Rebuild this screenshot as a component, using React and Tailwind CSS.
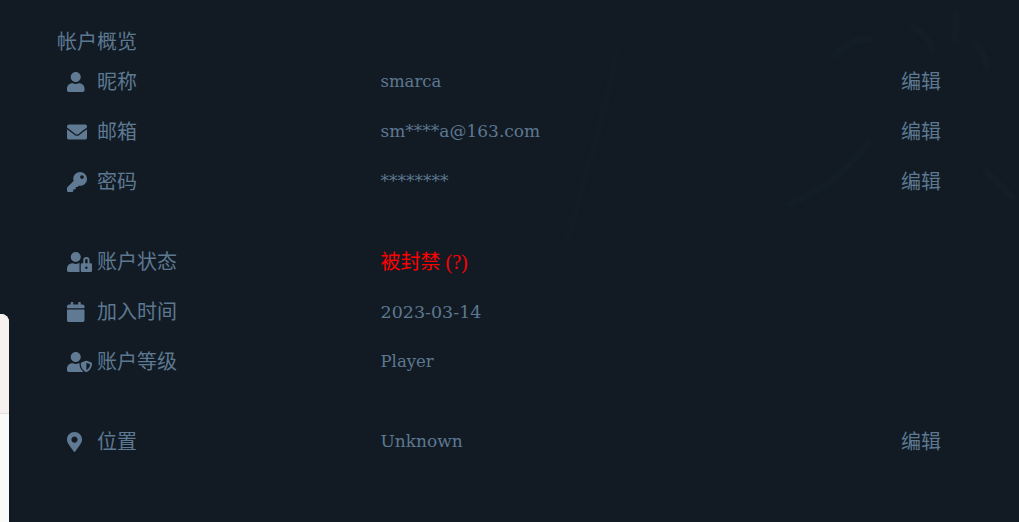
import { FaUser, FaEnvelope, FaKey, FaUserLock, FaCalendar, FaUserShield, FaMapMarkerAlt } from 'react-icons/fa';

const groups = [
  [
    { icon: FaUser, iconWidth: 'w-[17.5px]', label: '昵称', value: 'smarca', size: 'text-[16.5px]', edit: true },
    { icon: FaEnvelope, iconWidth: 'w-5', label: '邮箱', value: 'sm****a@163.com', size: 'text-[17px]', edit: true },
    { icon: FaKey, iconWidth: 'w-5', label: '密码', value: '********', size: 'text-[17px]', edit: true },
  ],
  [
    { icon: FaUserLock, iconWidth: 'w-[25px]', label: '账户状态', banned: true },
    { icon: FaCalendar, iconWidth: 'w-[17.5px]', label: '加入时间', value: '2023-03-14', size: 'text-[17.5px]' },
    { icon: FaUserShield, iconWidth: 'w-[25px]', label: '账户等级', value: 'Player', size: 'text-[16.5px]' },
  ],
  [
    { icon: FaMapMarkerAlt, iconWidth: 'w-[15px]', label: '位置', value: 'Unknown', size: 'text-[17px]', edit: true },
  ],
];

function Row({ icon: Icon, iconWidth, label, value, size, edit, banned }) {
  return (
    <div className="grid h-[50px] grid-cols-[30px_283.5px_1fr_auto] items-center pl-[10px] pr-[78px]">
      <span className="flex items-center">
        <Icon className={`h-5 ${iconWidth} text-[#5f7a92]`} />
      </span>
      <span className="text-[20px] text-[#5d7891]">{label}</span>
      {banned
        ? <span className="font-['Liberation_Serif','Noto_Sans_CJK_SC',serif] text-[20px] text-[#ff0000]">被封禁 (?)</span>
        : <span className={`${size} text-[#5d7891]`}>{value}</span>}
      {edit ? <span className="text-[20px] text-[#5d7891]">编辑</span> : <span />}
    </div>
  );
}

export default function App() {
  return (
    <div className="relative h-[522px] overflow-hidden bg-[#121b24] pl-[57px] pt-[28px] font-['DejaVu_Serif','Noto_Sans_CJK_SC',serif]">
      {/* faint artwork behind the page */}
      <svg className="absolute inset-0 blur-[2px]" width="1019" height="522" fill="none" stroke="#14212b" strokeWidth="3">
        <path d="M910 27q18 5 23 25" />
        <path d="M833 57q20-22 40-17" />
        <path d="M970 42q15 5 17 28" />
        <path d="M955 10q3 15-1 33" />
        <path d="M870 140q-30 45-83 65" />
        <path d="M985 170q15 15 30 30" />
      </svg>
      <svg className="absolute inset-0 blur-[2px]" width="1019" height="522" fill="none" stroke="#131e28" strokeWidth="3">
        <path d="M617 50q-10 50-24 100t-26 90" />
      </svg>
      <div className="relative">
        <h2 className="h-[29px] text-[20px] leading-[28px] font-normal text-[#5d7891]">帐户概览</h2>
        {groups.map((rows, i) => (
          <div key={i} className={i === 2 ? 'mb-[52px]' : 'mb-[30px]'}>
            {rows.map(row => <Row key={row.label} {...row} />)}
          </div>
        ))}
        <div className="pl-[40px] text-[20px] leading-[28px] text-[#5d7891]">社交</div>
      </div>

      {/* panel sticking in from the left edge */}
      <div className="absolute bottom-0 left-0 top-[314px] w-[9px] rounded-tr-lg bg-[#fbfafa]">
        <div className="h-[100px] rounded-tr-lg border-b border-[#e4e0de] bg-[#f6f1ef]" />
      </div>
    </div>
  );
}
